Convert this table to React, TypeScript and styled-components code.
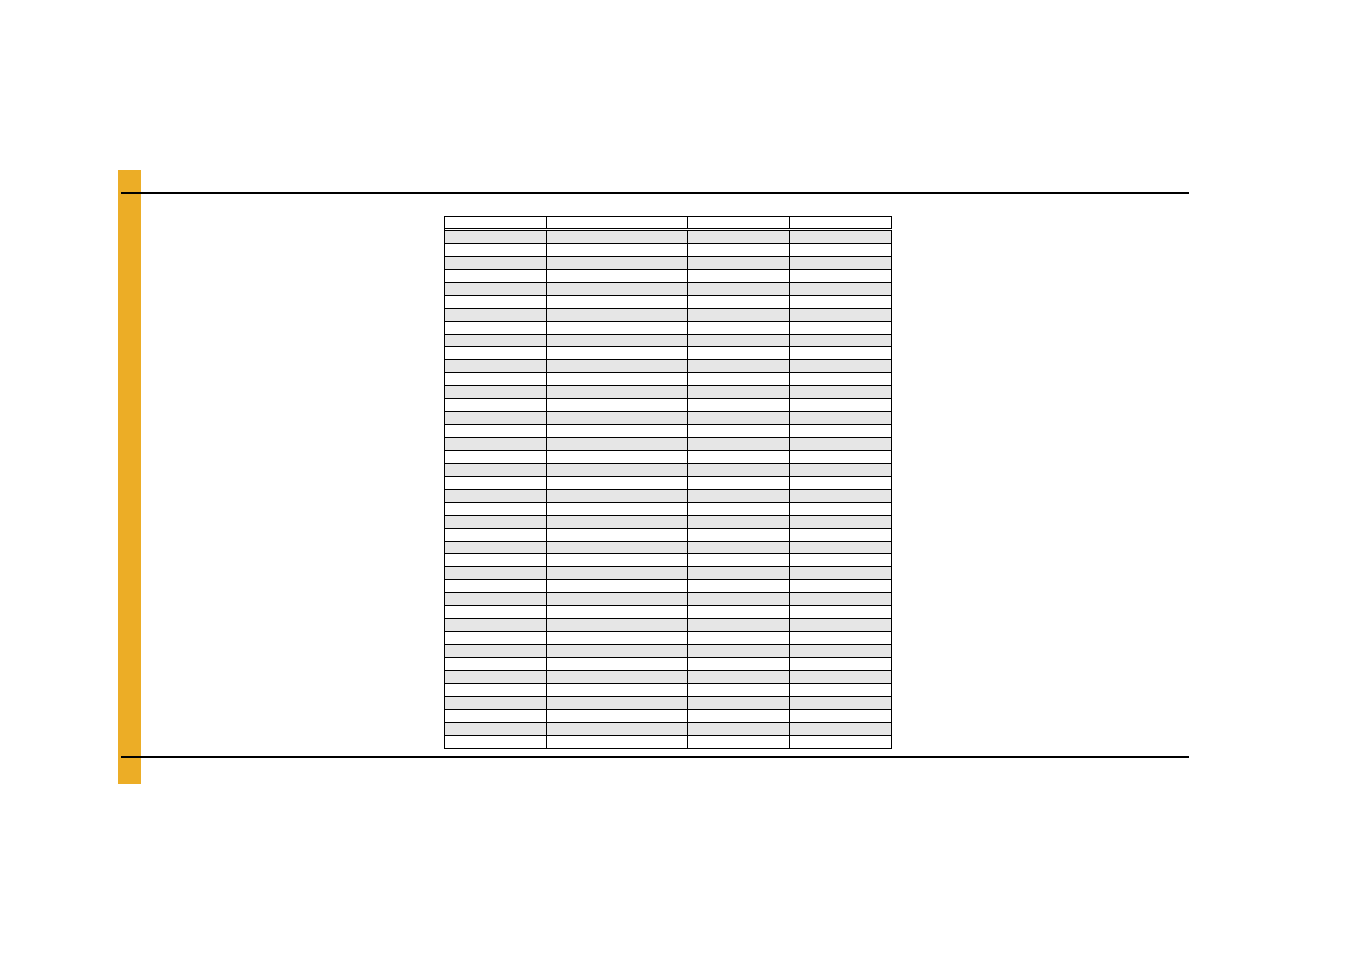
import React from 'react';
import styled, { createGlobalStyle } from 'styled-components';

const GlobalStyle = createGlobalStyle`
  html, body {
    margin: 0;
    padding: 0;
    background: #fff;
    font-family: "Liberation Sans", Arial, sans-serif;
  }
`;

const columns = [102, 141, 102, 102];
const rowCount = 40;

function App() {
  return (
    <>
      <GlobalStyle />
      <Page>
        <Frame>
          <Rule />
          <Body>
            <Sheet>
              <HeaderRow>
                {columns.map((w, i) => (
                  <Cell key={i} $width={w} />
                ))}
              </HeaderRow>
              {[...Array(rowCount)].map((_, r) => (
                <Row key={r} $shaded={r % 2 === 0}>
                  {columns.map((w, i) => (
                    <Cell key={i} $width={w} />
                  ))}
                </Row>
              ))}
            </Sheet>
          </Body>
          <Rule />
        </Frame>
      </Page>
    </>
  );
}

export default App;

const Page = styled.div`
  width: 1349px;
  height: 954px;
  padding: 170px 0 0 118px;
  box-sizing: border-box;
`;

const Frame = styled.div`
  width: 1071px;
  height: 614px;
  box-sizing: border-box;
  padding: 22px 0 0 3px;
  background: linear-gradient(to right, #ecad26 23px, transparent 23px);
  display: flex;
  flex-direction: column;
`;

const Rule = styled.div`
  height: 2px;
  background: #000;
  width: 1068px;
`;

const Body = styled.div`
  padding: 22px 0 7px 323px;
`;

const Sheet = styled.div`
  display: flex;
  flex-direction: column;
  width: 448px;
  border-left: 1px solid #000;
  border-top: 1px solid #000;
  box-sizing: border-box;
`;

const HeaderRow = styled.div`
  display: flex;
  height: 14px;
  box-sizing: border-box;
  border-bottom: 3px double #000;
`;

const Row = styled.div<{ $shaded: boolean }>`
  display: flex;
  height: 12.95px;
  box-sizing: border-box;
  border-bottom: 1px solid #000;
  background: ${(p) => (p.$shaded ? '#e6e6e6' : '#fff')};
`;

const Cell = styled.div<{ $width: number }>`
  width: ${(p) => p.$width}px;
  flex: none;
  box-sizing: border-box;
  border-right: 1px solid #000;
`;
